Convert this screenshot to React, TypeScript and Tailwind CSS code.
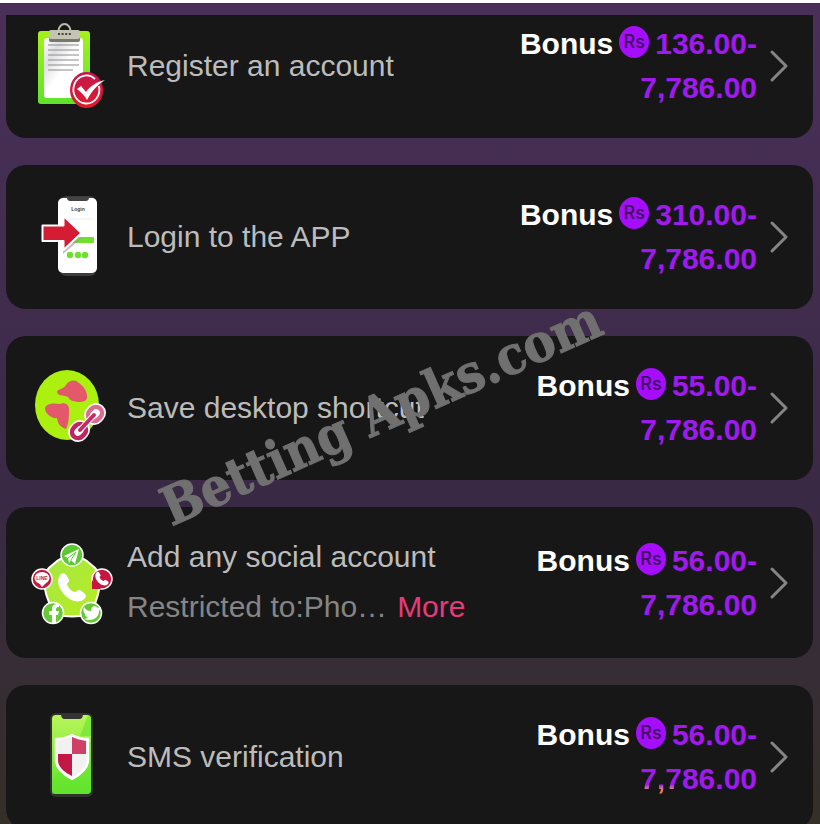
import React from 'react';

function ClipboardIcon() {
    return (
        <svg viewBox="0 0 84 84" className="w-[84px] h-[84px] overflow-visible" aria-hidden="true">
            <defs>
                <linearGradient id="board" x1="0" y1="0" x2="0" y2="1">
                    <stop offset="0" stopColor="#a6f01a" />
                    <stop offset="1" stopColor="#5fe32c" />
                </linearGradient>
                <linearGradient id="paper" x1="0" y1="0" x2="1" y2="1">
                    <stop offset="0" stopColor="#ffffff" />
                    <stop offset="0.25" stopColor="#e0e0e4" />
                    <stop offset="0.5" stopColor="#ffffff" />
                </linearGradient>
                <linearGradient id="seal" x1="0" y1="0" x2="0" y2="1">
                    <stop offset="0" stopColor="#c3184f" />
                    <stop offset="1" stopColor="#e01c2c" />
                </linearGradient>
            </defs>
            <rect x="8" y="7" width="52" height="73" rx="3" fill="url(#board)" />
            <rect x="14" y="14" width="39" height="60" rx="3" fill="url(#paper)" />
            <path d="M28.500 7a6 7 0 0 1 12 0" fill="none" stroke="#b9b9b0" strokeWidth="2" />
            <rect x="19" y="8" width="31" height="10" rx="2" fill="#77776a" />
            <rect x="19" y="6" width="31" height="9" rx="2" fill="#c4c4b5" />
            <path d="M28 10h13" stroke="#444" strokeWidth="2" strokeDasharray="2 1.600" />
            <path d="M18 21h31M18 26h31M18 31h31M18 36h31M18 41h31M18 46h25" stroke="#8b8b8b" strokeWidth="1" />
            <ellipse cx="56.500" cy="66" rx="16.500" ry="18" fill="url(#seal)" />
            <path d="M65 55a13 14 0 1 0 4 7" fill="none" stroke="#fff" strokeWidth="1.800" />
            <path d="M47 65l4-3 5 6c5-7 11-10 19-12-8 5-13 11-18 20-2-4-6-8-10-11z" fill="#fff" />
        </svg>
    );
}

function LoginIcon() {
    return (
        <svg viewBox="0 0 84 84" className="w-[84px] h-[84px]" aria-hidden="true">
            <rect x="30" y="1" width="36" height="80" rx="6" fill="#3c3c3c" />
            <rect x="28" y="3" width="39" height="75" rx="5" fill="#fff" />
            <path d="M37 2h22c0 3-1 4-4 4H41c-3 0-4-1-4-4z" fill="#444" />
            <text x="48" y="16" textAnchor="middle" fontSize="5" fontWeight="bold" fontFamily="Liberation Sans, sans-serif" fill="#444">Login</text>
            <path d="M37 24h26" stroke="#eee" strokeWidth="1" />
            <rect x="40" y="42" width="24" height="6" rx="1" fill="#70df2e" />
            <g fill="#70df2e">
                <circle cx="40" cy="60" r="3.200" />
                <circle cx="48" cy="60" r="3.200" />
                <circle cx="55" cy="60" r="3.200" />
            </g>
            <path d="M33 52v7l20-17z" fill="#999" opacity=".6" />
            <path d="M12.500 30.500h21V21l18 17-18 17v-9h-21z" fill="#d41c35" stroke="#fff" strokeWidth="2" strokeLinejoin="round" />
        </svg>
    );
}

function GlobeIcon() {
    return (
        <svg viewBox="0 0 84 84" className="w-[84px] h-[84px]" aria-hidden="true">
            <ellipse cx="37" cy="39" rx="32" ry="35" fill="#abf00f" />
            <path d="M27 26c0-3 7-3 9-7 3-5 9-6 13-2 5 4 8 8 8 13 1 5-4 6-9 6-5-1-8-1-10-5-3-2-10 0-11-5z" fill="#e4586b" />
            <path d="M15 42c2-5 9-5 15-4 4-2 9 0 9 5 0 7 0 14-3 20-5-2-8-4-9-11-5 1-12-4-12-10z" fill="#e4586b" />
            <g stroke="#fff" strokeWidth="8">
                <rect x="-7.500" y="-6" width="15" height="12" rx="6" transform="translate(49 65) rotate(-48)" />
                <rect x="-7.500" y="-6" width="15" height="12" rx="6" transform="translate(65 48) rotate(-48)" />
            </g>
            <g fill="#fff" strokeWidth="4.500">
                <rect x="-7.500" y="-6" width="15" height="12" rx="6" transform="translate(65 48) rotate(-48)" stroke="#dc6c91" />
                <rect x="-7.500" y="-6" width="15" height="12" rx="6" transform="translate(49 65) rotate(-48)" stroke="#bf2560" />
            </g>
            <path d="M50 64l14-15" stroke="#fff" strokeWidth="6" strokeLinecap="round" />
            <path d="M50 64l14-15" stroke="#c22f66" strokeWidth="4" strokeLinecap="round" />
        </svg>
    );
}

const handset = 'M-11-11c3-3 5-2 7 1l2 4c1 2-2 3-2 4 1 4 4 7 8 8 2 0 3-3 5-2l4 3c3 2 2 5-1 7-11 7-31-13-23-25z';

function SocialIcon() {
    return (
        <svg viewBox="0 0 84 84" className="w-[84px] h-[84px]" aria-hidden="true">
            <defs>
                <linearGradient id="hub" x1="0" y1="0" x2="1" y2="1">
                    <stop offset="0" stopColor="#a5e845" />
                    <stop offset="1" stopColor="#b8ec21" />
                </linearGradient>
            </defs>
            <path d="M42 13Q58 17 71 34 70 54 61 72 42 79 24 72 14 54 13 34 26 17 42 13z" fill="url(#hub)" stroke="#fff" strokeWidth="2" strokeLinejoin="round" />
            <path d={handset} transform="translate(41 45)" fill="#fff" />
            <g stroke="#fff" strokeWidth="1.500">
                <circle cx="42" cy="14" r="11" fill="#5cc832" />
                <circle cx="12" cy="38" r="10" fill="#c5173f" />
                <circle cx="72" cy="38" r="10" fill="#c5173f" />
                <circle cx="23" cy="72" r="10.500" fill="#67ca32" />
                <circle cx="61" cy="72" r="10.500" fill="#67ca32" />
            </g>
            <path d="M62 48v-9l9 9z" fill="#c5173f" />
            <path d="M34 15l15-7-4 15-4-4-2 3-1-5z" fill="#fff" />
            <path d="M38 17l8-6-5 8" fill="none" stroke="#5cc832" strokeWidth="1" />
            <ellipse cx="12" cy="37" rx="7.500" ry="6" fill="#fff" />
            <path d="M9 42l3 4 4-4z" fill="#fff" />
            <text x="12" y="39" textAnchor="middle" fontSize="5" fontWeight="bold" fontFamily="Liberation Sans, sans-serif" fill="#c5173f">LINE</text>
            <path d={handset} transform="translate(71.500 37) scale(.48)" fill="#fff" />
            <path d="M22 82V74h-3v-4h3v-2c0-4 2-5 7-5v3c-3 0-3 1-3 4h3l-1 4h-2v8z" fill="#fff" />
            <path d="M54 66c2 3 4 4 7 4 0-5 4-6 7-3l3-1-2 4c0 7-7 11-15 8 2 0 3-1 4-2-2 0-3-1-3-3-2-2-2-5-1-7z" fill="#fff" />
        </svg>
    );
}

function SmsIcon() {
    return (
        <svg viewBox="0 0 84 84" className="w-[84px] h-[84px] overflow-visible" aria-hidden="true">
            <defs>
                <linearGradient id="screen" x1="0" y1="0" x2="0" y2="1">
                    <stop offset="0" stopColor="#b9f559" />
                    <stop offset="1" stopColor="#5fe42d" />
                </linearGradient>
            </defs>
            <rect x="20" y="-2" width="43" height="84" rx="6" fill="#2f332c" />
            <rect x="22" y="0" width="39" height="79" rx="4" fill="url(#screen)" />
            <path d="M61 7v19L22 64v15h35q4 0 4-4z" fill="#64e42c" opacity=".5" />
            <path d="M61 3v18H50L58 0z" fill="#64e42c" opacity=".6" />
            <path d="M31-2h22c0 4-1 6-4 6H35c-3 0-4-2-4-6z" fill="#343434" />
            <path d="M26 24c6 0 12-2 16-4 4 2 10 4 16 4v21c0 8-7 14-16 19-9-5-16-11-16-19z" fill="#f1f1f1" stroke="#fff" strokeWidth="2.500" strokeLinejoin="round" />
            <path d="M42 22c4 2 9 3 14 4v13H42z" fill="#cf4067" />
            <path d="M28 39h14v22c-8-4-14-9-14-16z" fill="#c21846" />
        </svg>
    );
}

interface Task {
    title: string;
    min: string;
    note?: string;
    glow?: boolean;
    icon: React.ReactNode;
}

const tasks: Task[] = [
    { title: 'Register an account', min: '136.00', icon: <ClipboardIcon /> },
    { title: 'Login to the APP', min: '310.00', icon: <LoginIcon /> },
    { title: 'Save desktop shortcut', min: '55.00', icon: <GlobeIcon /> },
    { title: 'Add any social account', min: '56.00', note: 'Restricted to:Pho…', icon: <SocialIcon /> },
    { title: 'SMS verification', min: '56.00', glow: true, icon: <SmsIcon /> },
];

function RupeeBadge() {
    return (
        <span className="inline-flex w-[30px] h-8 mx-1.5 mb-2 items-center justify-center rounded-[50%] bg-[#a50dfb] align-middle font-['Inter',sans-serif] text-lg leading-5 font-medium text-[#40115c]">
            Rs
        </span>
    );
}

function TaskCard({ task }: { task: Task }) {
    return (
        <li className="flex items-center rounded-[20px] bg-[#171717] py-7 px-6 first:rounded-t-none first:pt-[7px]">
            <div className="shrink-0">{task.icon}</div>
            <div className="ml-[13px] min-w-0 flex-1 whitespace-nowrap">
                <h2 className="leading-[44px] text-[#bcbcbc]">{task.title}</h2>
                {task.note && (
                    <p className="mt-[5px] leading-[46px] text-[#858585]">
                        {task.note}
                        <a href="#more" className="ml-2.5 text-[#e83a78]">More</a>
                    </p>
                )}
            </div>
            <p className="shrink-0 whitespace-nowrap text-right font-bold leading-[44px] text-[#a01af0]">
                <span className="text-white">Bonus</span>
                <RupeeBadge />
                {task.min}-<br />
                {task.glow ? (
                    <>
                        <span className="bg-linear-to-b from-[#a01af0] from-70% to-[#f57a50] to-85% bg-clip-text text-transparent">7,7</span>
                        86.00
                    </>
                ) : (
                    '7,786.00'
                )}
            </p>
            <button type="button" aria-label={`Open ${task.title}`} className="ml-3 shrink-0">
                <svg viewBox="0 0 20 34" className="w-5 h-[34px]" fill="none" stroke="#858585" strokeWidth="3" strokeLinecap="round" strokeLinejoin="round">
                    <path d="M3 3l14 14L3 31" />
                </svg>
            </button>
        </li>
    );
}

export default function App() {
    return (
        <main className="relative h-screen overflow-hidden border-t-[3px] border-white bg-linear-to-b from-[#4a3059] via-[#3a2945] via-60% to-[#342f27] pt-3 pl-[6px] pr-[7px] font-['Liberation_Sans',Arial,sans-serif] text-[30px]">
            <ul className="flex flex-col gap-[27px]">
                {tasks.map((task) => (
                    <TaskCard key={task.title} task={task} />
                ))}
            </ul>
            <div className="pointer-events-none absolute left-[174px] top-[479px] origin-bottom-left -rotate-[24deg] whitespace-nowrap font-['DejaVu_Serif_Condensed','DejaVu_Serif',serif] text-[53px] font-bold leading-[50px] text-[#707070] [-webkit-text-stroke:1px_#707070]">
                Betting Apks.com
            </div>
        </main>
    );
}
